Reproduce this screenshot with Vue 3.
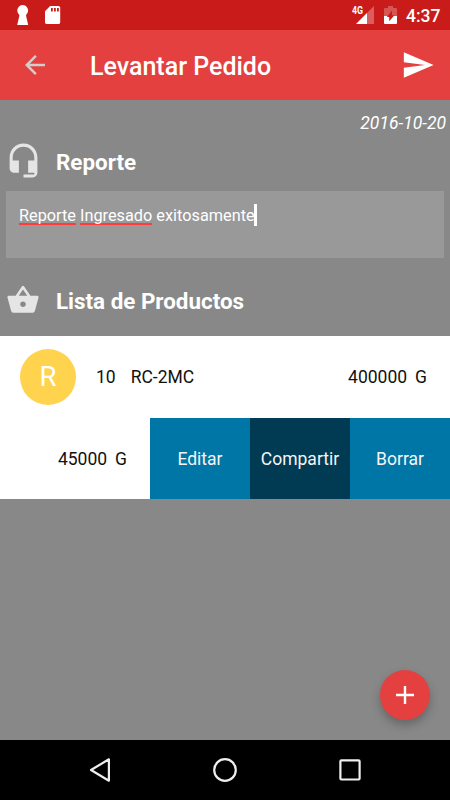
<template>
	<div class="screen">
		<header class="status-bar">
			<svg class="keyhole" width="12" height="20" viewBox="0 0 12 20" fill="#fff">
				<path d="M5.7 0A5.5 5.5 0 0 1 9.4 9.4L9 10.4L11.2 20H.2L2.4 10.4L2 9.4A5.5 5.5 0 0 1 5.7 0z" />
			</svg>
			<svg class="sd-card" width="16" height="18" viewBox="0 0 16 18">
				<path fill="#fff" d="M5.2 0H13.3C14.5 0 15.2.7 15.2 1.8V16.2C15.2 17.3 14.5 18 13.4 18H1.8C.7 18 0 17.3 0 16.2V5.2z" />
				<path fill="#c91c1a" d="M6 2h1.8v3.6H6zM9 2h1.8v3.6H9zM12 2h1.8v3.6H12z" />
			</svg>
			<svg class="signal" width="24" height="20" viewBox="0 0 24 20">
				<path fill="#da5e5d" d="M22 0V18H4z" />
				<path fill="#fff" d="M15 7V18H4z" />
				<text x="0" y="8.2" class="network" fill="#fff" textLength="11" lengthAdjust="spacingAndGlyphs">4G</text>
			</svg>
			<svg class="battery" width="13" height="19" viewBox="0 0 13 19">
				<path fill="#d75553" d="M4 0H9V2H12Q13 2 13 3V10H0V3Q0 2 1 2H4z" />
				<path fill="#fff" d="M0 10H13V17Q13 18 12 18H1Q0 18 0 17z" />
				<path fill="#c91c1a" d="M8 4.5V9.3H10.4L5.2 15.2V11H2.8z" />
			</svg>
			<span class="clock">4:37</span>
		</header>

		<nav class="app-bar">
			<button class="back" aria-label="Volver">
				<svg width="30" height="30" viewBox="0 0 24 24" fill="#d2cccc">
					<path d="M20 11H7.83l5.59-5.59L12 4l-8 8 8 8 1.41-1.41L7.83 13H20v-2z" />
				</svg>
			</button>
			<h1 class="title">Levantar Pedido</h1>
			<button class="send" aria-label="Enviar">
				<svg width="34" height="34" viewBox="0 0 24 24" fill="#fff">
					<path d="M2.01 21L23 12 2.01 3 2 10l15 2-15 2z" />
				</svg>
			</button>
		</nav>

		<main class="content">
			<p class="date">2016-10-20</p>

			<section class="section report">
				<svg class="section-icon" width="37" height="37" viewBox="0 0 24 24" fill="#e5e5e5">
					<path d="M12 1c-4.97 0-9 4.03-9 9v7c0 1.66 1.34 3 3 3h3v-8H5v-2c0-3.87 3.13-7 7-7s7 3.13 7 7v2h-4v8h4v1h-7v2h6c1.66 0 3-1.34 3-3V10c0-4.97-4.03-9-9-9z" />
				</svg>
				<h2>Reporte</h2>
			</section>

			<div class="field">
				<span class="misspelled">Reporte</span>&nbsp;<span class="misspelled">Ingresado</span>&nbsp;<span>exitosamente</span><i class="caret"></i>
			</div>

			<section class="section products">
				<svg class="section-icon" width="34" height="34" viewBox="0 0 24 24" fill="#e5e5e5">
					<path d="M17.21 9l-4.38-6.56c-.19-.28-.51-.42-.83-.42-.32 0-.64.14-.83.43L6.79 9H2c-.55 0-1 .45-1 1 0 .09.01.18.04.27l2.54 9.27c.23.84 1 1.46 1.92 1.46h13c.92 0 1.69-.62 1.93-1.46l2.54-9.27L23 10c0-.55-.45-1-1-1h-4.79zM9 9l3-4.4L15 9H9zm3 8c-1.1 0-2-.9-2-2s.9-2 2-2 2 .9 2 2-.9 2-2 2z" />
				</svg>
				<h2>Lista de Productos</h2>
			</section>

			<div class="list">
				<div class="row">
					<span class="avatar">{{ product.name[0] }}</span>
					<span class="quantity">{{ product.quantity }}</span>
					<span class="name">{{ product.name }}</span>
					<span class="price">{{ product.price }}<span class="currency">G</span></span>
				</div>
				<div class="row swiped">
					<span class="price">45000<span class="currency">G</span></span>
					<button
						v-for="action in actions"
						:key="action"
						class="action"
						:class="{ pressed: action === pressed }"
						@click="pressed = action"
					>{{ action }}</button>
				</div>
			</div>

			<button class="fab" aria-label="Agregar">
				<svg width="18" height="18" viewBox="0 0 18 18" fill="#fff">
					<path d="M7.8 0h2.4v7.8H18v2.4h-7.8V18H7.8v-7.8H0V7.8h7.8z" />
				</svg>
			</button>
		</main>

		<footer class="nav-bar">
			<svg width="24" height="26" viewBox="0 0 24 26">
				<path d="M3 13L20.9 2.3V23.7z" />
			</svg>
			<svg width="26" height="26" viewBox="0 0 26 26">
				<circle cx="13" cy="13" r="10.8" />
			</svg>
			<svg width="24" height="24" viewBox="0 0 24 24">
				<rect x="2.4" y="2.3" width="19.2" height="19.2" rx="1" />
			</svg>
		</footer>
	</div>
</template>

<script setup>
	import { ref } from 'vue';

	const product = {
		quantity: 10,
		name: 'RC-2MC',
		price: 400000
	};

	const actions = ['Editar', 'Compartir', 'Borrar'];
	const pressed = ref('Compartir');
</script>

<style>
	body {
		margin: 0;
	}
</style>

<style scoped>
	.screen {
		width: 450px;
		height: 800px;
		display: flex;
		flex-direction: column;
		overflow: hidden;
		background: #888;
		color: #fff;
		font-family: Roboto, sans-serif;
		white-space: nowrap;
	}

	button {
		border: none;
		padding: 0;
		background: none;
		color: inherit;
		font: inherit;
		cursor: pointer;
	}

	svg {
		display: block;
		flex: none;
	}

	h1,
	h2,
	p {
		margin: 0;
	}

	.status-bar {
		height: 30px;
		flex: none;
		display: flex;
		align-items: flex-start;
		box-sizing: border-box;
		padding: 5px 0 0 17px;
		background: #c91c1a;
	}

	.sd-card {
		margin: 1px auto 0 16px;
	}

	.signal {
		margin: 1px 8px 0 0;
	}

	.network {
		font-size: 10px;
		font-weight: 700;
	}

	.battery {
		margin: 1px 9px 0 0;
	}

	.clock {
		width: 44px;
		font-size: 17.5px;
		font-weight: 500;
		line-height: 23px;
	}

	.app-bar {
		height: 70px;
		flex: none;
		display: flex;
		align-items: center;
		box-sizing: border-box;
		padding: 0 15px 0 20px;
		background: #e4403f;
	}

	.title {
		margin-left: 40px;
		font-size: 25px;
		font-weight: 500;
		line-height: 30px;
		padding-top: 3px;
	}

	.send {
		margin-left: auto;
	}

	.content {
		position: relative;
		height: 640px;
		flex: none;
	}

	.date {
		height: 42px;
		box-sizing: border-box;
		padding: 12px 4px 0 0;
		font-size: 17.5px;
		font-style: italic;
		line-height: 22px;
		text-align: right;
	}

	.section {
		display: flex;
		align-items: center;
	}

	.section h2 {
		font-size: 22.4px;
		font-weight: 700;
		line-height: 28px;
	}

	.report {
		height: 38px;
		padding-left: 5px;
		gap: 14px;
	}

	.report .section-icon {
		margin-bottom: 1px;
	}

	.report h2 {
		padding-top: 2px;
	}

	.products {
		height: 34px;
		margin-top: 25px;
		padding-left: 6px;
		gap: 16px;
	}

	.products h2 {
		padding-top: 1px;
	}

	.field {
		height: 67px;
		margin: 11px 6px 0;
		box-sizing: border-box;
		padding: 13px;
		display: flex;
		align-items: flex-start;
		background: #999;
		font-size: 16.3px;
		line-height: 24px;
	}

	.misspelled {
		height: 19px;
		border-bottom: 2px solid #ff3b3b;
	}

	.caret {
		width: 3px;
		height: 22px;
		margin-left: -0.5px;
		background: #fff;
	}

	.list {
		margin-top: 19px;
		background: #fff;
		color: #111;
		font-size: 17.5px;
	}

	.row {
		height: 82px;
		display: flex;
		align-items: center;
		box-sizing: border-box;
		padding: 0 23px 0 20px;
	}

	.avatar {
		width: 56px;
		height: 56px;
		border-radius: 50%;
		background: #ffd34e;
		color: #fff;
		font-size: 27.5px;
		line-height: 56px;
		text-align: center;
	}

	.quantity {
		margin-left: 20px;
	}

	.name {
		margin-left: 15px;
	}

	.price {
		margin-left: auto;
	}

	.currency {
		margin-left: 8px;
	}

	.row.swiped {
		height: 81px;
		padding: 0;
	}

	.swiped .price {
		margin-right: 23px;
	}

	.action {
		width: 100px;
		height: 100%;
		background: #0076a6;
		color: #f5f5f5;
	}

	.action.pressed {
		background: #003a53;
	}

	.fab {
		position: absolute;
		right: 20px;
		bottom: 20px;
		width: 50px;
		height: 50px;
		display: flex;
		align-items: center;
		justify-content: center;
		border-radius: 50%;
		background: #e4403f;
		box-shadow: 0 5px 10px rgba(0, 0, 0, 0.25);
	}

	.nav-bar {
		height: 60px;
		flex: none;
		display: flex;
		align-items: center;
		justify-content: space-between;
		box-sizing: border-box;
		padding: 0 88px;
		background: #000;
		fill: none;
		stroke: #eee;
		stroke-width: 2.2;
		stroke-linejoin: round;
	}
</style>
